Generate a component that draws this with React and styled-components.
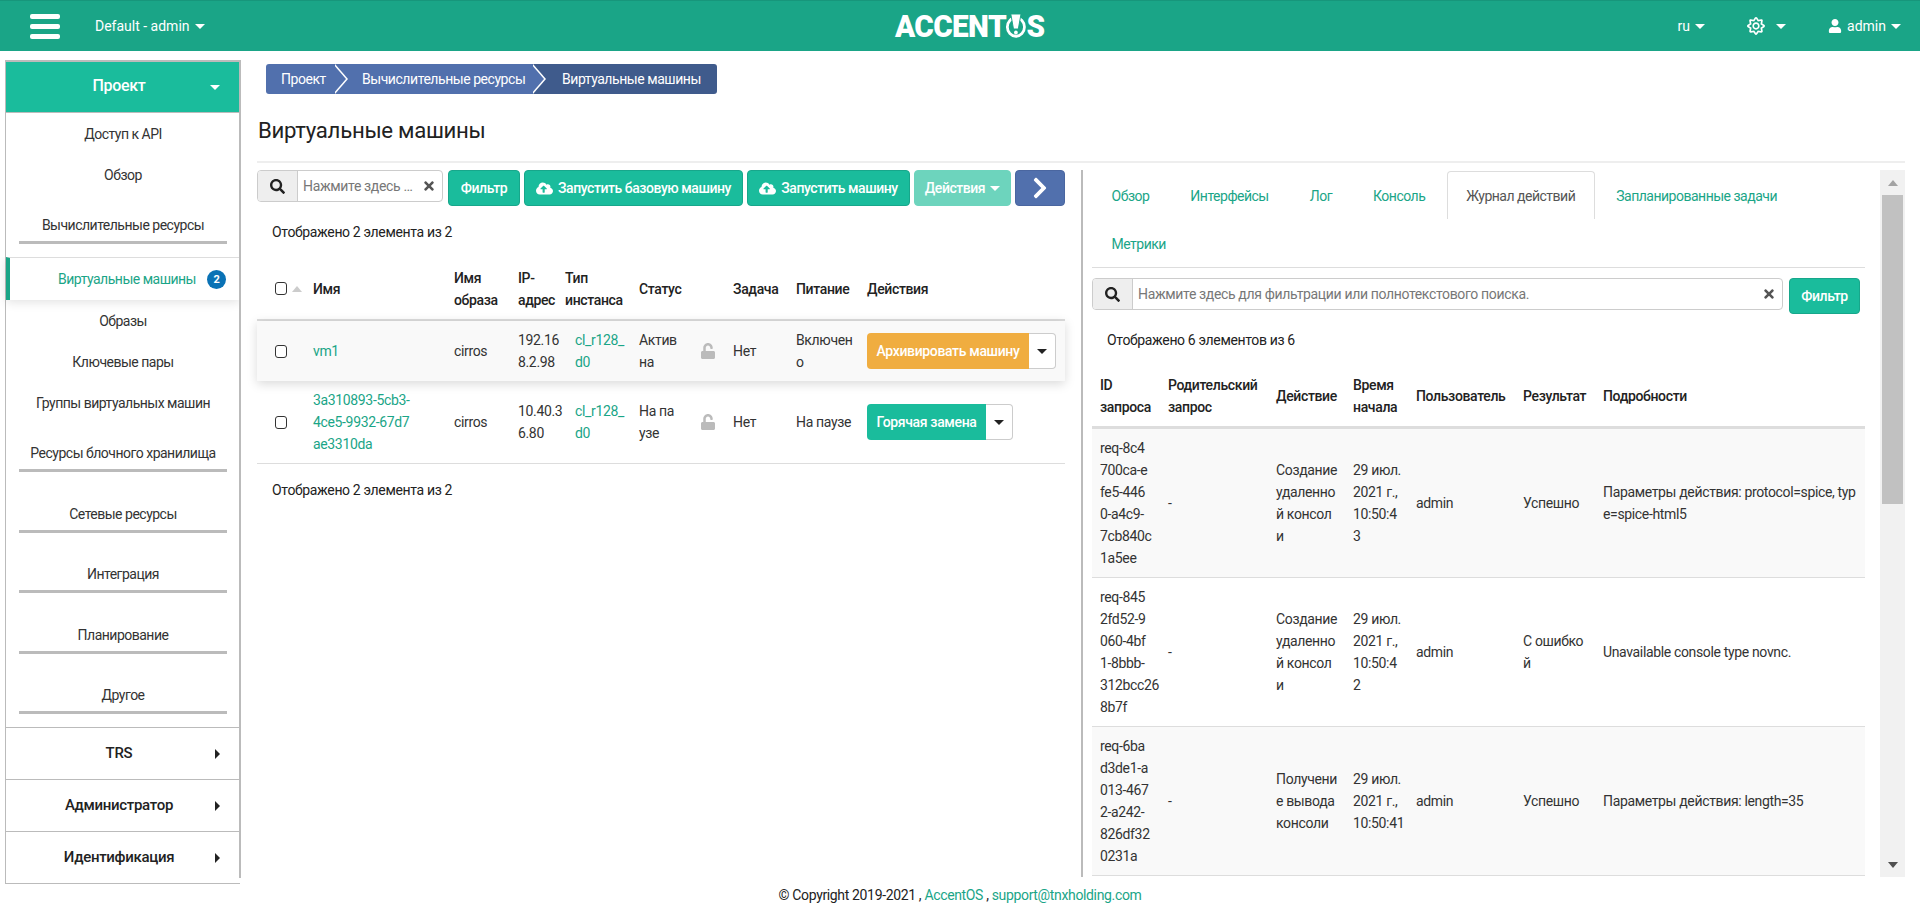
import React from 'react'
import styled, { createGlobalStyle } from 'styled-components'
import { FaSearch, FaTimes, FaCloudUploadAlt, FaChevronRight, FaUnlock, FaUser, FaRegSun } from 'react-icons/fa'

const GREEN = '#1abc9c'
const DARK_GREEN = '#1aa587'
const LINE = '#bbb'
const BLUE = '#5170ad'
const DARK_BLUE = '#3f5b8c'

const Global = createGlobalStyle`
  * { box-sizing: border-box; }
  html, body { margin: 0; height: 100%; overflow: hidden; }
  body {
    font-family: Roboto, "Noto Sans", sans-serif;
    font-size: 14px;
    line-height: 22px;
    letter-spacing: -0.35px;
    color: #333;
    background: #fff;
  }
`

const Page = styled.div`
  display: flex;
  flex-direction: column;
  height: 903px;
`

const Header = styled.header`
  flex: 0 0 51px;
  display: flex;
  align-items: center;
  background: ${DARK_GREEN};
  border-top: 1px solid #17967b;
  color: #fff;
  padding: 0 19px 0 30px;
`
const HeaderLeft = styled.div`
  flex: 0 0 865px;
  display: flex;
  align-items: center;
  gap: 35px;
`
const Burger = styled.div`
  width: 30px;
  display: flex;
  flex-direction: column;
  gap: 5px;
  span {
    height: 5px;
    border-radius: 2px;
    background: #fff;
  }
`
const HeaderLink = styled.div`
  display: flex;
  align-items: center;
  gap: ${p => p.$gap || 5}px;
  letter-spacing: 0;
`
const Logo = styled.div`
  display: flex;
  align-items: center;
  font-weight: 900;
  font-size: 32px;
  line-height: 26px;
  letter-spacing: -0.7px;
  white-space: nowrap;
  transform: scaleX(0.93);
  transform-origin: left center;
`
const HeaderRight = styled.div`
  margin-left: auto;
  display: flex;
  align-items: center;
  gap: 42px;
`
const Caret = styled.span`
  display: inline-block;
  width: 0;
  height: 0;
  border-style: solid;
  border-color: transparent;
  border-width: ${p => (p.$right ? '5px 0 5px 5px' : `${p.$s || 5}px ${p.$s || 5}px 0`)};
  border-top-color: ${p => (p.$right ? 'transparent' : 'currentColor')};
  border-left-color: ${p => (p.$right ? 'currentColor' : 'transparent')};
`

const Body = styled.div`
  flex: 1;
  display: flex;
  align-items: flex-start;
  padding-left: 5px;
`

const Sidebar = styled.nav`
  position: relative;
  flex: 0 0 235px;
  margin-top: 9px;
  border: 1px solid ${LINE};
  border-top-width: 2px;
  border-right: 0;
  text-align: center;
  letter-spacing: -0.5px;
  &::after {
    content: '';
    position: absolute;
    top: -2px;
    right: -1px;
    bottom: 5px;
    width: 2px;
    background: ${LINE};
  }
`
const Section = styled.div`
  position: relative;
  height: ${p => (p.$open ? 51 : 52)}px;
  display: flex;
  align-items: center;
  justify-content: center;
  padding-right: 8px;
  padding-bottom: 2px;
  font-size: ${p => (p.$open ? 16 : 15)}px;
  font-weight: 500;
  letter-spacing: -0.3px;
  color: ${p => (p.$open ? '#fff' : '#222')};
  background: ${p => (p.$open ? GREEN : '#fff')};
  border-bottom: ${p => (p.$open ? `1px solid ${LINE}` : '0')};
  border-top: ${p => (p.$open ? '0' : `1px solid ${LINE}`)};
  i {
    position: absolute;
    right: 20px;
    top: 50%;
    margin-top: -5px;
    display: flex;
    align-items: center;
    height: 10px;
  }
`
const Item = styled.div`
  height: 41px;
  line-height: 43px;
`
const ActiveItem = styled.div`
  height: 43px;
  display: flex;
  align-items: center;
  justify-content: flex-end;
  gap: 11px;
  padding-right: 14px;
  color: ${DARK_GREEN};
  border-left: 4px solid ${DARK_GREEN};
  border-top: 1px solid #ddd;
  box-shadow: 0 2px 10px rgba(0, 0, 0, 0.12);
  clip-path: inset(0 0 -12px -6px);
`
const Badge = styled.span`
  width: 19px;
  height: 19px;
  border-radius: 50%;
  background: #0a72b5;
  color: #fff;
  font-size: 11px;
  font-weight: 700;
  line-height: 19px;
  text-align: center;
`
const SubHead = styled.div`
  height: ${p => p.$h || 60.5}px;
  padding: 19px 13px 0;
  &::after {
    content: '';
    display: block;
    height: 3px;
    margin-top: 5px;
    background: ${LINE};
  }
`

const Main = styled.main`
  flex: 0 0 1648px;
  margin-left: 17px;
`
const Crumbs = styled.div`
  display: flex;
  height: 30px;
  margin: 13px 0 0 9px;
  color: #fff;
  overflow: hidden;
  border-radius: 3px;
  width: max-content;
  letter-spacing: -0.45px;
`
const Crumb = styled.div`
  position: relative;
  z-index: ${p => p.$z};
  display: flex;
  align-items: center;
  width: ${p => p.$w}px;
  padding-left: ${p => p.$pl}px;
  background: ${p => p.$bg};
  &::before,
  &::after {
    content: '';
    display: ${p => (p.$z === 1 ? 'none' : 'block')};
    position: absolute;
    top: 0;
    width: 13px;
    height: 30px;
    clip-path: polygon(0 0, 100% 50%, 0 100%);
  }
  &::after {
    left: 100%;
    background: #fff;
  }
  &::before {
    left: calc(100% - 2px);
    z-index: 1;
    background: ${p => p.$bg};
  }
`
const Title = styled.h1`
  margin: 21px 0 0 1px;
  height: 30px;
  font-size: 22.2px;
  font-weight: 400;
  line-height: 30px;
  letter-spacing: -0.3px;
  color: #222;
`
const Rule = styled.hr`
  margin: 16px 0 7px;
  border: 0;
  border-top: 2px solid #eee;
`
const Columns = styled.div`
  display: flex;
  gap: 16px;
`
const LeftPane = styled.section`
  flex: 0 0 808px;
`
const RightPane = styled.section`
  flex: 0 0 824px;
  height: 707px;
  display: flex;
`
const PaneBody = styled.div`
  flex: 1;
  min-width: 0;
  overflow: hidden;
  border-left: 2px solid ${LINE};
  padding: 0 15px 0 9px;
`
const Rail = styled.div`
  flex: 0 0 25px;
  display: flex;
  flex-direction: column;
  background: #f1f1f1;
`
const RailBtn = styled.div`
  flex: 0 0 25px;
  display: flex;
  align-items: center;
  justify-content: center;
  margin-top: ${p => (p.$down ? 'auto' : '0')};
  &::before {
    content: '';
    border-style: solid;
    border-color: transparent;
    border-width: ${p => (p.$down ? '6px 5.5px 0' : '0 5.5px 6px')};
    border-top-color: ${p => (p.$down ? '#505050' : 'transparent')};
    border-bottom-color: ${p => (p.$down ? 'transparent' : '#a3a3a3')};
  }
`
const RailThumb = styled.div`
  flex: 0 0 309px;
  margin: 0 2px;
  background: #c1c1c1;
`

const Toolbar = styled.div`
  display: flex;
  align-items: flex-start;
  gap: 4px;
`
const SearchBox = styled.div`
  display: flex;
  align-items: center;
  width: ${p => p.$w}px;
  height: 32px;
  margin-right: ${p => p.$mr || 1}px;
  background: #fff;
  border: 1px solid #ccc;
  border-radius: 4px;
  overflow: hidden;
`
const SearchAddon = styled.span`
  flex: 0 0 40px;
  align-self: stretch;
  display: flex;
  align-items: center;
  justify-content: center;
  background: #eee;
  border-right: 1px solid #ccc;
  color: #222;
  font-size: 15px;
`
const SearchInput = styled.input`
  flex: 1;
  min-width: 0;
  height: 100%;
  padding: 0 6px 0 5px;
  border: 0;
  outline: 0;
  background: transparent;
  font: inherit;
  letter-spacing: inherit;
  text-overflow: ellipsis;
  &::placeholder { color: #777; opacity: 1; }
`
const Clear = styled.span`
  display: flex;
  padding-right: 6px;
  color: #555;
  font-size: 14px;
`
const Btn = styled.button`
  display: flex;
  align-items: center;
  justify-content: center;
  gap: 5px;
  width: ${p => p.$w}px;
  height: 36px;
  padding: 0;
  border: 1px solid ${p => p.$border || '#17a78b'};
  border-radius: 4px;
  background: ${p => p.$bg || GREEN};
  color: #fff;
  font: inherit;
  font-weight: 500;
  letter-spacing: -0.45px;
`
const Count = styled.div`
  height: 52px;
  padding-left: 15px;
  line-height: 52px;
  color: #222;
`

const Table = styled.table`
  width: 100%;
  table-layout: fixed;
  border-collapse: collapse;
`
const Th = styled.th`
  width: ${p => p.$w}px;
  height: ${p => p.$h || 62}px;
  padding: 8px;
  border-bottom: ${p => p.$bw || 2}px solid #ddd;
  font-weight: 500;
  text-align: left;
  color: #222;
  white-space: pre;
  vertical-align: middle;
`
const Td = styled.td`
  padding: 8px;
  padding-left: ${p => p.$pl || 8}px;
  white-space: pre;
  vertical-align: middle;
  color: ${p => p.$c || 'inherit'};
`
const Row = styled.tr`
  background: ${p => (p.$tint ? '#f9f9f9' : '#fff')};
  border-bottom: ${p => (p.$plain ? '0' : '1px solid #ddd')};
  box-shadow: ${p => (p.$lift ? '0 3px 10px rgba(0, 0, 0, 0.15)' : 'none')};
  position: ${p => (p.$lift ? 'relative' : 'static')};
`
const Check = styled.input.attrs({ type: 'checkbox' })`
  appearance: none;
  display: block;
  flex: 0 0 auto;
  width: 12px;
  height: 13px;
  margin: 0 0 0 10px;
  border: 1.5px solid #333;
  border-radius: 3px;
  background: #fff;
`
const HeadCheck = styled.div`
  display: flex;
  align-items: center;
  gap: 5px;
`
const SortUp = styled.span`
  flex: 0 0 auto;
  border-style: solid;
  border-width: 0 5px 6px;
  border-color: transparent transparent #ccc;
`
const LockIcon = styled(FaUnlock)`
  display: block;
  color: #bbb;
  font-size: 16px;
`
const Split = styled.div`
  display: flex;
  height: 36px;
`
const SplitMain = styled.button`
  width: ${p => p.$w}px;
  padding: 0;
  border: 0;
  border-radius: 4px 0 0 4px;
  background: ${p => p.$bg};
  color: #fff;
  font: inherit;
  font-weight: 500;
  letter-spacing: inherit;
`
const SplitCaret = styled.button`
  display: flex;
  align-items: center;
  justify-content: center;
  width: 27px;
  padding: 0;
  border: 1px solid #ccc;
  border-left: 0;
  border-radius: 0 4px 4px 0;
  background: #fff;
  color: #222;
`
const Tabs = styled.div`
  display: flex;
  flex-wrap: wrap;
  padding-top: 1px;
  gap: 0 2px;
  border-bottom: 1px solid #ddd;
  margin-bottom: 10px;
  letter-spacing: -0.5px;
`
const Tab = styled.div`
  height: 48px;
  padding: 0 18.5px;
  line-height: 48px;
  color: ${p => (p.$active ? '#555' : DARK_GREEN)};
  border: 1px solid ${p => (p.$active ? '#ddd' : 'transparent')};
  border-bottom: 0;
  border-radius: 4px 4px 0 0;
`
const Foot = styled.footer`
  flex: 0 0 auto;
  padding-bottom: 2px;
  text-align: center;
  color: #222;
  a { color: ${DARK_GREEN}; text-decoration: none; }
`

const sections = ['Ресурсы блочного хранилища', 'Сетевые ресурсы', 'Интеграция', 'Планирование']
const tabs = ['Обзор', 'Интерфейсы', 'Лог', 'Консоль', 'Журнал действий', 'Запланированные задачи', 'Метрики']

const vms = [
  { name: 'vm1', ip: '192.16\n8.2.98', status: 'Актив\nна', power: 'Включен\nо', action: 'Архивировать машину', bg: '#f0ad40', w: 162 },
  { name: '3a310893-5cb3-\n4ce5-9932-67d7\nae3310da', ip: '10.40.3\n6.80', status: 'На па\nузе', power: 'На паузе', action: 'Горячая замена', bg: GREEN, w: 119 },
]

const create = 'Создание\nудаленно\nй консол\nи'
const logs = [
  { id: 'req-8c4\n700ca-e\nfe5-446\n0-a4c9-\n7cb840c\n1a5ee', act: create, time: '29 июл.\n2021 г.,\n10:50:4\n3', res: 'Успешно', info: 'Параметры действия: protocol=spice, typ\ne=spice-html5' },
  { id: 'req-845\n2fd52-9\n060-4bf\n1-8bbb-\n312bcc26\n8b7f', act: create, time: '29 июл.\n2021 г.,\n10:50:4\n2', res: 'С ошибко\nй', info: 'Unavailable console type novnc.' },
  { id: 'req-6ba\nd3de1-a\n013-467\n2-a242-\n826df32\n0231a', act: 'Получени\nе вывода\nконсоли', time: '29 июл.\n2021 г.,\n10:50:41', res: 'Успешно', info: 'Параметры действия: length=35' },
]

function LogoMark() {
  return (
    <svg width="22" height="26" viewBox="0 0 22 26" aria-hidden="true">
      <circle cx="11" cy="14" r="9.2" fill="none" stroke="#fff" strokeWidth="3" />
      <path d="M5.5 1h11L13.6 16H8.4z" fill="#fff" stroke={DARK_GREEN} strokeWidth="1" />
      <circle cx="11" cy="19.5" r="2" fill="#fff" />
    </svg>
  )
}

export default function App() {
  return (
    <Page>
      <Global />
      <Header>
        <HeaderLeft>
          <Burger><span /><span /><span /></Burger>
          <HeaderLink>Default - admin <Caret /></HeaderLink>
        </HeaderLeft>
        <Logo>ACCENT<LogoMark />S</Logo>
        <HeaderRight>
          <HeaderLink>ru <Caret $s={5.5} /></HeaderLink>
          <HeaderLink $gap={11}><FaRegSun size={18} /> <Caret $s={5.5} /></HeaderLink>
          <HeaderLink><FaUser size={14} /> admin <Caret /></HeaderLink>
        </HeaderRight>
      </Header>

      <Body>
        <Sidebar>
          <Section $open>Проект<i><Caret /></i></Section>
          <Item>Доступ к API</Item>
          <Item>Обзор</Item>
          <SubHead $h={62}>Вычислительные ресурсы</SubHead>
          <ActiveItem>Виртуальные машины <Badge>2</Badge></ActiveItem>
          <Item>Образы</Item>
          <Item>Ключевые пары</Item>
          <Item>Группы виртуальных машин</Item>
          {sections.map(s => <SubHead key={s}>{s}</SubHead>)}
          <SubHead $h={62}>Другое</SubHead>
          <Section>TRS<i><Caret $right /></i></Section>
          <Section>Администратор<i><Caret $right /></i></Section>
          <Section>Идентификация<i><Caret $right /></i></Section>
        </Sidebar>

        <Main>
          <Crumbs>
            <Crumb $z={3} $bg={BLUE} $w={69} $pl={15}>Проект</Crumb>
            <Crumb $z={2} $bg={BLUE} $w={198} $pl={27}>Вычислительные ресурсы</Crumb>
            <Crumb $z={1} $bg={DARK_BLUE} $w={184} $pl={29}>Виртуальные машины</Crumb>
          </Crumbs>
          <Title>Виртуальные машины</Title>
          <Rule />
          <Columns>
            <LeftPane>
              <Toolbar>
                <SearchBox $w={186}>
                  <SearchAddon><FaSearch /></SearchAddon>
                  <SearchInput placeholder="Нажмите здесь для фильтрации" />
                  <Clear><FaTimes /></Clear>
                </SearchBox>
                <Btn $w={72}>Фильтр</Btn>
                <Btn $w={219}><FaCloudUploadAlt size={17} />Запустить базовую машину</Btn>
                <Btn $w={163}><FaCloudUploadAlt size={17} />Запустить машину</Btn>
                <Btn $w={97} $bg="#6dd4bd" $border="#6dd4bd">Действия <Caret /></Btn>
                <Btn $w={50} $bg={BLUE} $border="#4a66a0"><FaChevronRight size={24} /></Btn>
              </Toolbar>
              <Count>Отображено 2 элемента из 2</Count>
              <Table>
                <thead>
                  <tr>
                    <Th $w={48}><HeadCheck><Check /><SortUp /></HeadCheck></Th>
                    <Th $w={141}>Имя</Th>
                    <Th $w={64}>{'Имя\nобраза'}</Th>
                    <Th $w={47}>{'IP-\nадрес'}</Th>
                    <Th $w={74}>{'Тип\nинстанса'}</Th>
                    <Th $w={61}>Статус</Th>
                    <Th $w={33} />
                    <Th $w={63}>Задача</Th>
                    <Th $w={71}>Питание</Th>
                    <Th>Действия</Th>
                  </tr>
                </thead>
                <tbody>
                  {vms.map((v, i) => (
                    <Row key={v.name} $tint={i === 0} $lift={i === 0} $plain={i === 0}>
                      <Td><Check /></Td>
                      <Td $c={DARK_GREEN}>{v.name}</Td>
                      <Td>cirros</Td>
                      <Td>{v.ip}</Td>
                      <Td $pl={18} $c={DARK_GREEN}>{'cl_r128_\nd0'}</Td>
                      <Td>{v.status}</Td>
                      <Td><LockIcon /></Td>
                      <Td>Нет</Td>
                      <Td>{v.power}</Td>
                      <Td>
                        <Split>
                          <SplitMain $w={v.w} $bg={v.bg}>{v.action}</SplitMain>
                          <SplitCaret><Caret /></SplitCaret>
                        </Split>
                      </Td>
                    </Row>
                  ))}
                </tbody>
              </Table>
              <Count>Отображено 2 элемента из 2</Count>
            </LeftPane>

            <RightPane>
              <PaneBody>
                <Tabs>
                  {tabs.map(t => <Tab key={t} $active={t === 'Журнал действий'}>{t}</Tab>)}
                </Tabs>
                <Toolbar>
                  <SearchBox $w={691} $mr={2}>
                    <SearchAddon><FaSearch /></SearchAddon>
                    <SearchInput placeholder="Нажмите здесь для фильтрации или полнотекстового поиска." />
                    <Clear><FaTimes /></Clear>
                  </SearchBox>
                  <Btn $w={71}>Фильтр</Btn>
                </Toolbar>
                <Count>Отображено 6 элементов из 6</Count>
                <Table>
                  <thead>
                    <tr>
                      <Th $w={68} $h={60} $bw={3}>{'ID\nзапроса'}</Th>
                      <Th $w={108} $h={60} $bw={3}>{'Родительский\nзапрос'}</Th>
                      <Th $w={77} $h={60} $bw={3}>Действие</Th>
                      <Th $w={63} $h={60} $bw={3}>{'Время\nначала'}</Th>
                      <Th $w={107} $h={60} $bw={3}>Пользователь</Th>
                      <Th $w={80} $h={60} $bw={3}>Результат</Th>
                      <Th $h={60} $bw={3}>Подробности</Th>
                    </tr>
                  </thead>
                  <tbody>
                    {logs.map((l, i) => (
                      <Row key={l.id} $tint={i % 2 === 0}>
                        <Td>{l.id}</Td>
                        <Td>-</Td>
                        <Td>{l.act}</Td>
                        <Td>{l.time}</Td>
                        <Td>admin</Td>
                        <Td>{l.res}</Td>
                        <Td>{l.info}</Td>
                      </Row>
                    ))}
                  </tbody>
                </Table>
              </PaneBody>
              <Rail>
                <RailBtn />
                <RailThumb />
                <RailBtn $down />
              </Rail>
            </RightPane>
          </Columns>
        </Main>
      </Body>

      <Foot>© Copyright 2019-2021 , <a href="#a">AccentOS</a> , <a href="#s">support@tnxholding.com</a></Foot>
    </Page>
  )
}
